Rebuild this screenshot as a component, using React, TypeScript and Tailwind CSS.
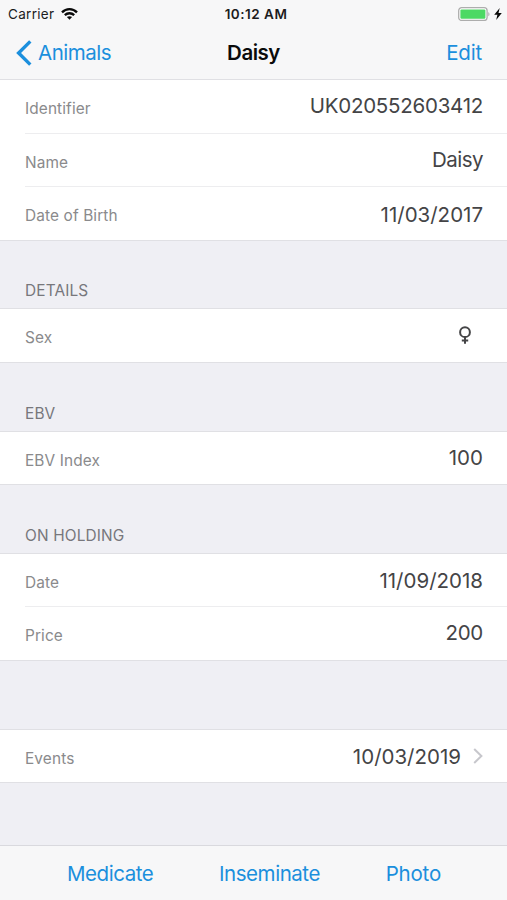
import type { ReactNode } from 'react';
import clsx from 'clsx';

type RowProps = {
  label: string;
  children: ReactNode;
  className?: string;
  valueClass?: string;
};

function Row({ label, children, className = 'h-[53px]', valueClass }: RowProps) {
  return (
    <div className={clsx('flex items-start justify-between pr-6', className)}>
      <span className="pt-[18px] text-[15.4px] leading-[22px] tracking-[0.12px] text-[#8a8a8c]">{label}</span>
      <span className={clsx('flex text-[20.5px] leading-[26px] text-[#444446]', valueClass)}>{children}</span>
    </div>
  );
}

function Group({ children }: { children: ReactNode }) {
  return (
    <div className="divide-y divide-[#ededef] border-y border-[#e0e0e4] bg-white pl-[25px]">
      {children}
    </div>
  );
}

function SectionHeader({ title, className = 'h-[68px]' }: { title?: string; className?: string }) {
  return (
    <h2 className={clsx('flex items-end pb-[6px] pl-[25px] text-[15.4px] leading-[22px] tracking-[0.15px] text-[#77777c]', className)}>
      {title}
    </h2>
  );
}

function StatusBar() {
  return (
    <div className="grid h-7 grid-cols-3 items-center pr-[5px] pl-2 text-[13.5px] leading-7 text-[#1c1c1e]">
      <div className="flex items-center gap-[7px]">
        <span className="tracking-[0.3px]">Carrier</span>
        <svg width="17" height="12" viewBox="0 0 17 12" fill="none" stroke="#0a0a0a" strokeWidth="2.3">
          <path d="M1 4.4C5.2 0.1 11.8 0.1 16 4.4" />
          <path d="M3.8 7.2C6.5 4.6 10.5 4.6 13.2 7.2" />
          <path d="M8.5 11.8L5.9 9.1C7.4 7.8 9.6 7.8 11.1 9.1Z" fill="#0a0a0a" stroke="none" />
        </svg>
      </div>
      <span className="pl-[2px] text-center font-semibold tracking-[0.5px] whitespace-nowrap">10:12 AM</span>
      <div className="flex items-center justify-end gap-1">
        <svg width="32" height="14" viewBox="0 0 32 14">
          <rect x="0.7" y="0.7" width="28.4" height="12.8" rx="3" fill="#fff" stroke="#adadad" strokeWidth="1.3" />
          <rect x="2.4" y="2.4" width="25" height="9.4" rx="1.2" fill="#4cd964" />
          <path d="M30.4 4.9C31.8 5.6 31.8 8.6 30.4 9.3Z" fill="#a5a5a5" />
        </svg>
        <svg width="8" height="12" viewBox="0 0 8 12" fill="#0a0a0a">
          <path d="M5.7 0L0.2 6.7H3.4L2.2 12L7.8 4.9H4.5Z" />
        </svg>
      </div>
    </div>
  );
}

export default function App() {
  return (
    <div className="flex h-[900px] w-[507px] flex-col overflow-hidden bg-[#efeff4] font-['Inter',sans-serif]">
      <header className="h-[79px] bg-[#f7f7f8]">
        <StatusBar />
        <nav className="grid h-[50px] grid-cols-3 items-center pr-[25px] pl-4 text-[20.5px] leading-[50px] tracking-[-0.5px] text-[#1b8fdd]">
          <div className="flex items-center gap-[6px]">
            <svg width="16" height="26" viewBox="0 0 16 26" fill="none" stroke="currentColor" strokeWidth="3.4">
              <path d="M14.3 1.4L2.6 13L14.3 24.6" />
            </svg>
            <span>Animals</span>
          </div>
          <h1 className="pl-[9px] text-center font-semibold text-[#0a0a0a]">Daisy</h1>
          <span className="text-right tracking-[-0.2px]">Edit</span>
        </nav>
      </header>

      <main className="flex-1">
        <Group>
          <Row label="Identifier" className="h-[54px]" valueClass="pt-[13px] tracking-[-0.25px]">UK020552603412</Row>
          <Row label="Name" valueClass="pt-[13px] tracking-[-0.5px]">Daisy</Row>
          <Row label="Date of Birth" valueClass="pt-[15px]">11/03/2017</Row>
        </Group>

        <SectionHeader title="DETAILS" className="h-[67px]" />
        <Group>
          <Row label="Sex" valueClass="pt-[17px] pr-3">
            <svg width="12" height="18" viewBox="0 0 12 18" fill="none" stroke="#444446" strokeWidth="2">
              <circle cx="6" cy="6.2" r="4.9" />
              <path d="M6 11V17.8M2.8 14.6H9.2" />
            </svg>
          </Row>
        </Group>

        <SectionHeader title="EBV" />
        <Group>
          <Row label="EBV Index" className="h-[52px]" valueClass="pt-[13px]">100</Row>
        </Group>

        <SectionHeader title="ON HOLDING" />
        <Group>
          <Row label="Date" valueClass="pt-[14px]">11/09/2018</Row>
          <Row label="Price" valueClass="pt-[13px] tracking-[-0.3px]">200</Row>
        </Group>

        <SectionHeader />
        <Group>
          <Row label="Events" className="h-[52px]" valueClass="pt-[14px]">
            10/03/2019
            <svg className="mt-1 ml-3" width="10" height="16" viewBox="0 0 10 16" fill="none" stroke="#c7c7cc" strokeWidth="2">
              <path d="M1.2 1L8.4 8L1.2 15" />
            </svg>
          </Row>
        </Group>
      </main>

      <footer className="flex h-[55px] justify-between border-t border-[#d9d9de] bg-[#f7f7f8] pr-[66px] pl-[67px] text-[20.5px] leading-[55px] tracking-[-0.45px] text-[#1b8fdd]">
        <span>Medicate</span>
        <span>Inseminate</span>
        <span className="tracking-[-0.2px]">Photo</span>
      </footer>
    </div>
  );
}
